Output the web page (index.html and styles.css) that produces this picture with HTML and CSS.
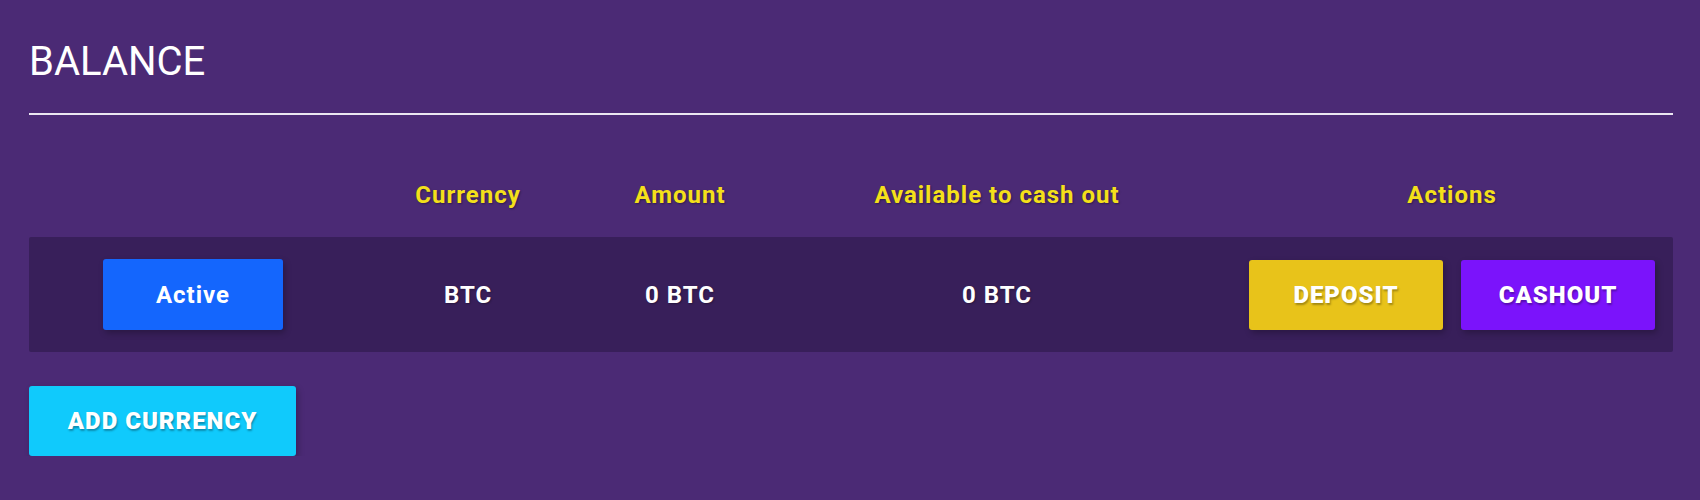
FILE: index.html
```html
<!DOCTYPE html>
<html lang="en">
<head>
    <meta charset="UTF-8">
    <meta name="viewport" content="width=device-width, initial-scale=1.0">
    <title>Balance</title>
    <link rel="stylesheet" href="styles.css">
</head>
<body>
    <div class="panel">
        <h2 class="panel-title">BALANCE</h2>

        <div class="balance-table">
            <div class="balance-head">
                <div></div>
                <div>Currency</div>
                <div>Amount</div>
                <div>Available to cash out</div>
                <div class="actions-cell">Actions</div>
            </div>
            <div class="balance-row">
                <div><button class="btn btn-active">Active</button></div>
                <div>BTC</div>
                <div>0 BTC</div>
                <div>0 BTC</div>
                <div class="actions-cell">
                    <button class="btn btn-caps btn-deposit">DEPOSIT</button>
                    <button class="btn btn-caps btn-cashout">CASHOUT</button>
                </div>
            </div>
        </div>

        <button class="btn btn-caps btn-add">ADD CURRENCY</button>
    </div>
</body>
</html>
```

FILE: styles.css
```css
body {
    margin: 0;
    background-color: #4b2a75;
    color: white;
    font-family: Roboto, "Liberation Sans", sans-serif;
}
.panel {
    padding: 0 27px 0 29px;
}
.panel-title {
    margin: 0;
    padding: 38px 0 28px;
    font-size: 40px;
    line-height: 47px;
    font-weight: 400;
    border-bottom: 2px solid #ebe6f1;
}
.balance-table {
    margin-top: 48px;
}
.balance-head,
.balance-row {
    display: grid;
    grid-template-columns: 328px 222px 202px 432px 1fr;
    align-items: center;
    text-align: center;
    font-size: 24px;
    font-weight: 700;
    letter-spacing: 1px;
}
.balance-head {
    padding: 18px 0 28px;
    line-height: 28px;
    color: #f4e01a;
    text-shadow: 1px 1px 2px rgba(0, 0, 0, 0.35);
}
.balance-row {
    padding: 22px 0;
    background-color: #381f5a;
    border-radius: 2px;
    text-shadow: 1px 1px 2px rgba(0, 0, 0, 0.3);
}
.actions-cell {
    display: flex;
    justify-content: center;
    gap: 18px;
    padding: 0 18px 0 36px;
}
.btn {
    height: 71px;
    border: none;
    border-radius: 3px;
    color: white;
    font-family: Roboto, "Liberation Sans", sans-serif;
    font-size: 24px;
    font-weight: 700;
    letter-spacing: 1px;
    cursor: pointer;
    box-shadow: 2px 3px 6px rgba(0, 0, 0, 0.25);
}
.btn-caps {
    font-weight: 900;
    text-shadow: 1px 2px 2px rgba(0, 0, 0, 0.3);
}
.btn-active {
    width: 180px;
    background-color: #1466fd;
}
.btn-deposit {
    width: 194px;
    height: 70px;
    background-color: #e8c31a;
}
.btn-cashout {
    width: 194px;
    height: 70px;
    background-color: #7b13fb;
}
.btn-add {
    margin-top: 34px;
    width: 267px;
    height: 70px;
    background-color: #10cafc;
}
```
